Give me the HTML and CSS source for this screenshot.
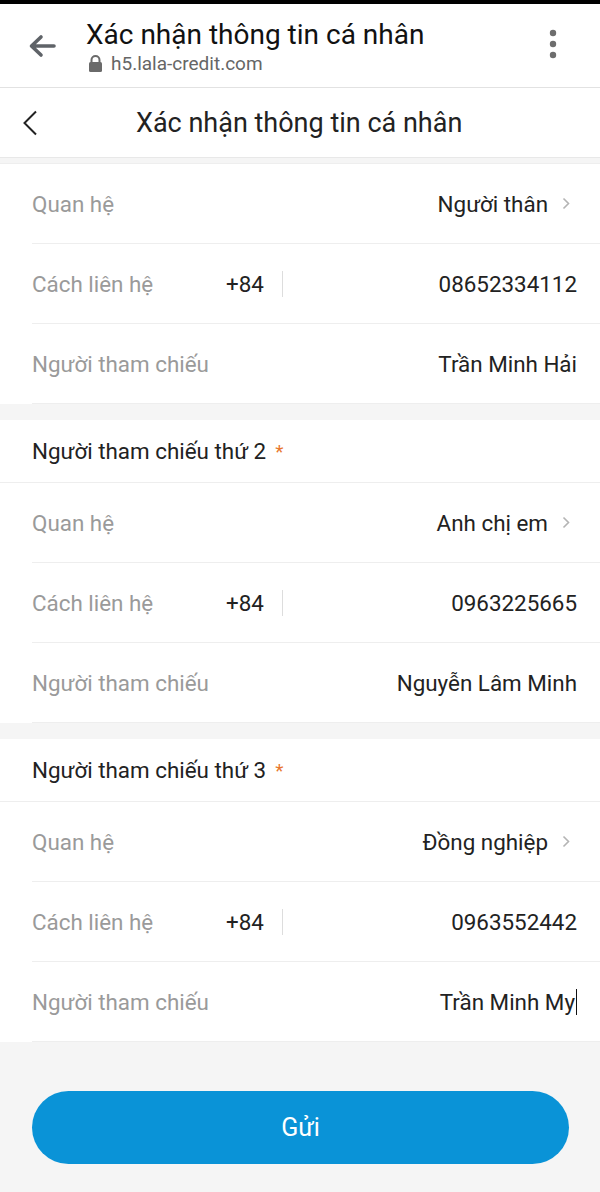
FILE: index.html
```html
<!DOCTYPE html>
<html>
<head>
    <meta charset="utf-8">
    <title>Xác nhận thông tin cá nhân</title>
    <link rel="stylesheet" href="styles.css">
</head>
<body>
    <div class="status-edge"></div>

    <div class="browser-bar">
        <svg class="browser-back" width="30" height="24" viewBox="0 0 30 24">
            <path d="M27 12H5M14 3L4.5 12L14 21" fill="none" stroke="#5f6368" stroke-width="3.6" stroke-linecap="round" stroke-linejoin="round"/>
        </svg>
        <div class="tab-info">
            <div class="tab-title">Xác nhận thông tin cá nhân</div>
            <div class="tab-url">
                <svg width="15" height="17" viewBox="0 0 15 17">
                    <path d="M3.5 7V5a4 4 0 0 1 8 0v2" fill="none" stroke="#6a6a6a" stroke-width="2"/>
                    <rect x="1" y="7" width="13" height="10" rx="1.5" fill="#6a6a6a"/>
                </svg>
                h5.lala-credit.com
            </div>
        </div>
        <svg class="browser-menu" width="10" height="30" viewBox="0 0 10 30">
            <circle cx="5" cy="4" r="3.2" fill="#6d6d6d"/>
            <circle cx="5" cy="15" r="3.2" fill="#6d6d6d"/>
            <circle cx="5" cy="26" r="3.2" fill="#6d6d6d"/>
        </svg>
    </div>

    <header class="app-header">
        <svg class="app-back" width="16" height="26" viewBox="0 0 16 26">
            <path d="M14 1.5L2.5 13L14 24.5" fill="none" stroke="#222" stroke-width="2"/>
        </svg>
        <h1>Xác nhận thông tin cá nhân</h1>
    </header>

    <main class="content">
        <section class="group">
            <div class="row row-select">
                <span class="label">Quan hệ</span>
                <span class="value">Người thân</span>
                <svg class="arrow" width="8" height="13" viewBox="0 0 8 13"><path d="M1.5 1.5L6.5 6.5L1.5 11.5" fill="none" stroke="#b4b4b4" stroke-width="1.6"/></svg>
            </div>
            <div class="row">
                <span class="label">Cách liên hệ</span>
                <span class="prefix">+84</span>
                <span class="value">08652334112</span>
            </div>
            <div class="row">
                <span class="label">Người tham chiếu</span>
                <span class="value">Trần Minh Hải</span>
            </div>
        </section>

        <section class="group">
            <div class="group-title">Người tham chiếu thứ 2<span class="req">*</span></div>
            <div class="row row-select">
                <span class="label">Quan hệ</span>
                <span class="value">Anh chị em</span>
                <svg class="arrow" width="8" height="13" viewBox="0 0 8 13"><path d="M1.5 1.5L6.5 6.5L1.5 11.5" fill="none" stroke="#b4b4b4" stroke-width="1.6"/></svg>
            </div>
            <div class="row">
                <span class="label">Cách liên hệ</span>
                <span class="prefix">+84</span>
                <span class="value">0963225665</span>
            </div>
            <div class="row">
                <span class="label">Người tham chiếu</span>
                <span class="value">Nguyễn Lâm Minh</span>
            </div>
        </section>

        <section class="group">
            <div class="group-title">Người tham chiếu thứ 3<span class="req">*</span></div>
            <div class="row row-select">
                <span class="label">Quan hệ</span>
                <span class="value">Đồng nghiệp</span>
                <svg class="arrow" width="8" height="13" viewBox="0 0 8 13"><path d="M1.5 1.5L6.5 6.5L1.5 11.5" fill="none" stroke="#b4b4b4" stroke-width="1.6"/></svg>
            </div>
            <div class="row">
                <span class="label">Cách liên hệ</span>
                <span class="prefix">+84</span>
                <span class="value">0963552442</span>
            </div>
            <div class="row">
                <span class="label">Người tham chiếu</span>
                <span class="value editing">Trần Minh My</span>
            </div>
        </section>

        <div class="actions">
            <button type="button">Gửi</button>
        </div>
    </main>
</body>
</html>
```

FILE: styles.css
```css
body {
    margin: 0;
    font-family: Roboto, "Noto Sans", Arial, sans-serif;
    background-color: #f5f5f5;
    color: #222;
}

.status-edge {
    height: 4px;
    background-color: #000;
}

.browser-bar {
    height: 83px;
    display: flex;
    align-items: center;
    background-color: #fff;
    border-bottom: 1px solid #e2e2e2;
}

.browser-back {
    margin-left: 27px;
    margin-right: 29px;
}

.tab-info {
    flex: 1;
    padding-top: 2px;
}

.tab-title {
    font-size: 28px;
    line-height: 32px;
    color: #111;
}

.tab-url {
    display: flex;
    align-items: center;
    gap: 8px;
    margin-top: 1px;
    margin-left: 2px;
    font-size: 19px;
    color: #666;
}

.browser-menu {
    margin-right: 42px;
    margin-bottom: 4px;
}

.app-header {
    height: 69px;
    display: flex;
    align-items: center;
    background-color: #fff;
    border-bottom: 1px solid #e8e8e8;
}

.app-back {
    margin-left: 22px;
}

.app-header h1 {
    margin: 0 0 0 98px;
    font-size: 27px;
    font-weight: normal;
    color: #222;
}

.content {
    padding-top: 5px;
}

.group {
    background-color: #fff;
    border-top: 1px solid #eee;
    margin-bottom: 16px;
}

.group + .group {
    border-top: none;
}

.group-title {
    height: 62px;
    display: flex;
    align-items: center;
    padding-left: 32px;
    font-size: 22.4px;
    border-bottom: 1px solid #eee;
}

.req {
    color: #e8772e;
    margin-left: 9px;
    font-size: 19px;
}

.row {
    height: 79px;
    margin-left: 32px;
    padding-right: 23px;
    display: flex;
    align-items: center;
    border-bottom: 1px solid #eee;
    font-size: 22.4px;
    white-space: nowrap;
}

.row-select {
    padding-right: 30px;
}

.label {
    color: #9a9a9a;
    width: 194px;
}

.prefix {
    color: #222;
    padding-right: 18px;
    border-right: 1px solid #ddd;
    line-height: 26px;
}

.value {
    margin-left: auto;
    color: #222;
}

.arrow {
    margin-left: 14px;
}

.editing {
    border-right: 1.5px solid #111;
    padding-right: 1px;
}

.actions {
    padding: 33px 31px 27px 32px;
}

.actions button {
    width: 100%;
    height: 73px;
    border: none;
    border-radius: 37px;
    background-color: #0a93d7;
    color: #fff;
    font-family: Roboto, Arial, sans-serif;
    font-size: 25px;
}
```
